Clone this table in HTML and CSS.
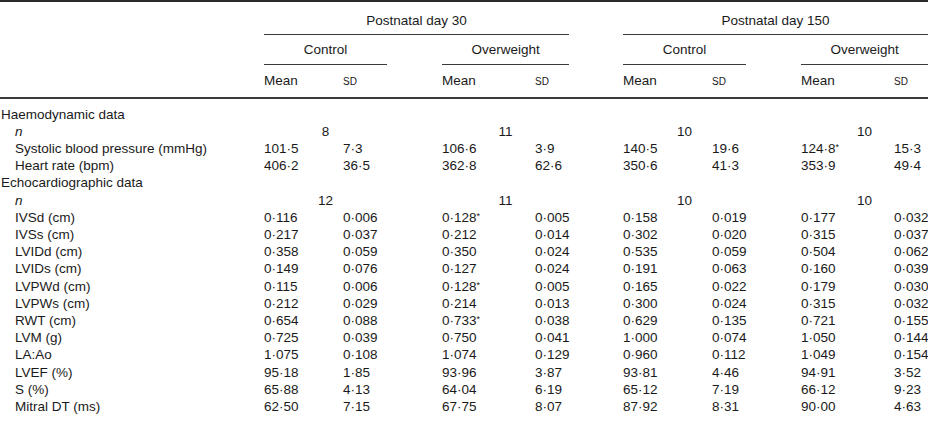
FILE: index.html
```html
<!DOCTYPE html>
<html>
<head>
<meta charset="utf-8">
<link rel="stylesheet" href="styles.css">
</head>
<body>
<table class="data">
  <colgroup>
    <col class="c-label"><col class="c-m1"><col class="c-s1"><col class="c-g1">
    <col class="c-m2"><col class="c-s2"><col class="c-g2">
    <col class="c-m3"><col class="c-s3"><col class="c-g3">
    <col class="c-m4"><col class="c-s4">
  </colgroup>
  <thead>
    <tr class="h1">
      <th></th>
      <th colspan="5" class="rule">Postnatal day 30</th>
      <th></th>
      <th colspan="5" class="rule">Postnatal day 150</th>
    </tr>
    <tr class="h2">
      <th></th>
      <th colspan="2" class="rule">Control</th><th></th>
      <th colspan="2" class="rule">Overweight</th><th></th>
      <th colspan="2" class="rule">Control</th><th></th>
      <th colspan="2" class="rule">Overweight</th>
    </tr>
    <tr class="h3">
      <th></th>
      <th>Mean</th><th><span class="sd">SD</span></th><th></th>
      <th>Mean</th><th><span class="sd">SD</span></th><th></th>
      <th>Mean</th><th><span class="sd">SD</span></th><th></th>
      <th>Mean</th><th><span class="sd">SD</span></th>
    </tr>
  </thead>
  <tbody>
    <tr class="first"><td class="sec" colspan="12">Haemodynamic data</td></tr>
    <tr><td class="lab"><i>n</i></td><td colspan="2" class="n">8</td><td></td><td colspan="2" class="n">11</td><td></td><td colspan="2" class="n">10</td><td></td><td colspan="2" class="n">10</td></tr>
    <tr><td class="lab">Systolic blood pressure (mmHg)</td><td>101·5</td><td>7·3</td><td></td><td>106·6</td><td>3·9</td><td></td><td>140·5</td><td>19·6</td><td></td><td>124·8<span class="ast">*</span></td><td>15·3</td></tr>
    <tr><td class="lab">Heart rate (bpm)</td><td>406·2</td><td>36·5</td><td></td><td>362·8</td><td>62·6</td><td></td><td>350·6</td><td>41·3</td><td></td><td>353·9</td><td>49·4</td></tr>
    <tr><td class="sec" colspan="12">Echocardiographic data</td></tr>
    <tr><td class="lab"><i>n</i></td><td colspan="2" class="n">12</td><td></td><td colspan="2" class="n">11</td><td></td><td colspan="2" class="n">10</td><td></td><td colspan="2" class="n">10</td></tr>
    <tr><td class="lab">IVSd (cm)</td><td>0·116</td><td>0·006</td><td></td><td>0·128<span class="ast">*</span></td><td>0·005</td><td></td><td>0·158</td><td>0·019</td><td></td><td>0·177</td><td>0·032</td></tr>
    <tr><td class="lab">IVSs (cm)</td><td>0·217</td><td>0·037</td><td></td><td>0·212</td><td>0·014</td><td></td><td>0·302</td><td>0·020</td><td></td><td>0·315</td><td>0·037</td></tr>
    <tr><td class="lab">LVIDd (cm)</td><td>0·358</td><td>0·059</td><td></td><td>0·350</td><td>0·024</td><td></td><td>0·535</td><td>0·059</td><td></td><td>0·504</td><td>0·062</td></tr>
    <tr><td class="lab">LVIDs (cm)</td><td>0·149</td><td>0·076</td><td></td><td>0·127</td><td>0·024</td><td></td><td>0·191</td><td>0·063</td><td></td><td>0·160</td><td>0·039</td></tr>
    <tr><td class="lab">LVPWd (cm)</td><td>0·115</td><td>0·006</td><td></td><td>0·128<span class="ast">*</span></td><td>0·005</td><td></td><td>0·165</td><td>0·022</td><td></td><td>0·179</td><td>0·030</td></tr>
    <tr><td class="lab">LVPWs (cm)</td><td>0·212</td><td>0·029</td><td></td><td>0·214</td><td>0·013</td><td></td><td>0·300</td><td>0·024</td><td></td><td>0·315</td><td>0·032</td></tr>
    <tr><td class="lab">RWT (cm)</td><td>0·654</td><td>0·088</td><td></td><td>0·733<span class="ast">*</span></td><td>0·038</td><td></td><td>0·629</td><td>0·135</td><td></td><td>0·721</td><td>0·155</td></tr>
    <tr><td class="lab">LVM (g)</td><td>0·725</td><td>0·039</td><td></td><td>0·750</td><td>0·041</td><td></td><td>1·000</td><td>0·074</td><td></td><td>1·050</td><td>0·144</td></tr>
    <tr><td class="lab">LA:Ao</td><td>1·075</td><td>0·108</td><td></td><td>1·074</td><td>0·129</td><td></td><td>0·960</td><td>0·112</td><td></td><td>1·049</td><td>0·154</td></tr>
    <tr><td class="lab">LVEF (%)</td><td>95·18</td><td>1·85</td><td></td><td>93·96</td><td>3·87</td><td></td><td>93·81</td><td>4·46</td><td></td><td>94·91</td><td>3·52</td></tr>
    <tr><td class="lab">S (%)</td><td>65·88</td><td>4·13</td><td></td><td>64·04</td><td>6·19</td><td></td><td>65·12</td><td>7·19</td><td></td><td>66·12</td><td>9·23</td></tr>
    <tr class="last"><td class="lab">Mitral DT (ms)</td><td>62·50</td><td>7·15</td><td></td><td>67·75</td><td>8·07</td><td></td><td>87·92</td><td>8·31</td><td></td><td>90·00</td><td>4·63</td></tr>
  </tbody>
</table>
</body>
</html>
```

FILE: styles.css
```css
html, body {
  margin: 0;
  padding: 0;
  background: #ffffff;
}

body {
  font-family: "Liberation Sans", Arial, sans-serif;
  font-size: 13.5px;
  color: #1a1a1a;
}

.data {
  width: 928px;
  table-layout: fixed;
  border-collapse: separate;
  border-spacing: 0;
  border-top: 2px solid #2a2a2a;
  border-bottom: 2px solid #2a2a2a;
}

.c-label { width: 264px; }
.c-m1 { width: 79px; }
.c-s1 { width: 44px; }
.c-g1 { width: 55px; }
.c-m2 { width: 93px; }
.c-s2 { width: 34px; }
.c-g2 { width: 54px; }
.c-m3 { width: 89px; }
.c-s3 { width: 34px; }
.c-g3 { width: 55px; }
.c-m4 { width: 93px; }
.c-s4 { width: 34px; }

th, td {
  padding: 0;
  line-height: 17.2px;
  font-weight: normal;
  text-align: left;
  white-space: nowrap;
  overflow: visible;
}

th {
  vertical-align: top;
}

.h1 th {
  padding-top: 10px;
  padding-bottom: 5px;
}

.h2 th {
  padding-top: 6px;
  padding-bottom: 6px;
}

.h3 th {
  padding-top: 7px;
  padding-bottom: 6px;
  border-bottom: 2px solid #3a3a3a;
}

th.rule {
  text-align: center;
  border-bottom: 1px solid #3a3a3a;
}

.sd {
  font-size: 10px;
}

.sec {
  padding-left: 1px;
}

.lab {
  padding-left: 15px;
}

.n {
  text-align: center;
}

.ast {
  font-size: 9px;
  vertical-align: 3px;
  line-height: 0;
}

tbody tr.first td {
  padding-top: 7px;
}

tbody tr.last td {
  padding-bottom: 12px;
}
```
